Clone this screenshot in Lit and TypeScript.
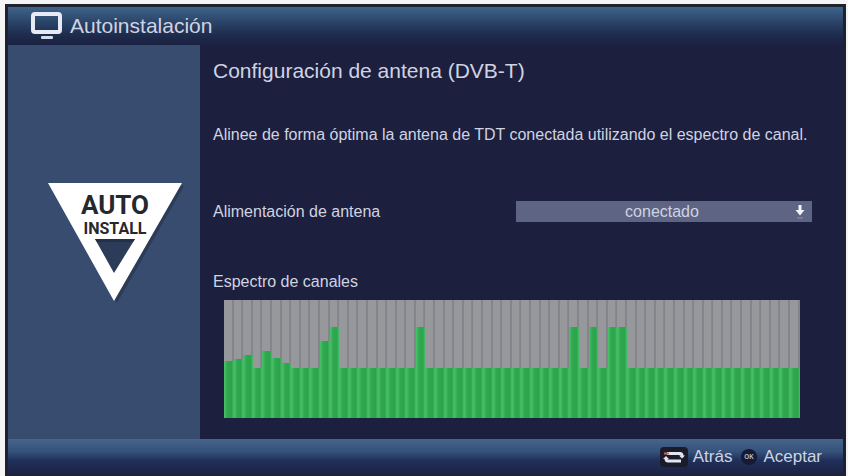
import { LitElement, html, css } from "lit";
import { customElement, property } from "lit/decorators.js";

const BASE_LEVEL = 42;
const PEAKS: Record<number, number> = {
  0: 48, 1: 50, 2: 53, 4: 57, 5: 51, 6: 47,
  10: 65, 11: 77, 20: 77, 36: 77, 38: 77, 40: 77, 41: 77,
};
const LEVELS = Array.from({ length: 60 }, (_, i) => PEAKS[i] ?? BASE_LEVEL);

@customElement("channel-spectrum")
export class ChannelSpectrum extends LitElement {
  @property({ attribute: false }) levels: number[] = [];

  static styles = css`
    :host { display: block; }
    .chart {
      display: flex;
      height: 118px;
      background: #929499;
    }
    .channel {
      flex: 1;
      display: flex;
      align-items: flex-end;
      background: linear-gradient(90deg, #96989c 0 75%, #7a7c83 90%, #8c8e93);
    }
    .level {
      width: 100%;
      background: linear-gradient(90deg, #4cc26b, #2fa84f 35%, #2ba54b 75%, #45bd64);
    }
  `;

  render() {
    return html`<div class="chart" role="img" aria-label="Espectro de canales">
      ${this.levels.map(
        (l) => html`<div class="channel"><div class="level" style="height:${l}%"></div></div>`
      )}
    </div>`;
  }
}

@customElement("app-root")
export class AppRoot extends LitElement {
  static styles = css`
    :host {
      display: block;
      box-sizing: border-box;
      min-height: 100vh;
      padding: 4px 2px 0 5px;
      background: #f4f4f4;
      font-family: "Liberation Sans", Arial, sans-serif;
      color: #d0d3e2;
    }
    * { box-sizing: border-box; }
    .screen {
      display: flex;
      flex-direction: column;
      min-height: calc(100vh - 4px);
      border: 3px solid #1d222e;
      border-bottom-width: 1px;
      background: #1c1f3d;
    }
    header {
      display: flex;
      align-items: center;
      gap: 6px;
      height: 38px;
      padding-left: 22px;
      background: linear-gradient(#3f648a, #2a4468 40%, #1d2b4c 75%, #1b2142);
    }
    .tv { width: 34px; height: 30px; }
    h1 { margin: 0; font-size: 21px; font-weight: 400; line-height: 24px; }
    .body { flex: 1; display: flex; }
    aside {
      width: 192px;
      padding-top: 138px;
      background: #374c6e;
    }
    .logo { display: block; width: 136px; height: 120px; margin-left: 40px; }
    .auto { font: 700 26px Roboto, sans-serif; }
    .install { font: 700 16px Roboto, sans-serif; }
    main { flex: 1; padding: 12px 31px 20px 13px; }
    h2 { margin: 0; font-size: 21px; font-weight: 400; line-height: 28px; }
    p { margin: 40px 0 0; font-size: 16px; line-height: 20px; white-space: nowrap; }
    .row {
      display: flex;
      align-items: center;
      justify-content: space-between;
      margin-top: 56px;
      font-size: 16px;
      line-height: 20px;
    }
    .picker { position: relative; width: 296px; height: 21px; }
    select {
      appearance: none;
      display: block;
      width: 100%;
      height: 100%;
      margin: 0;
      padding: 0 4px 0 0;
      border: 0;
      border-radius: 0;
      background: #5d6484;
      color: inherit;
      font: inherit;
      text-align: center;
      text-align-last: center;
    }
    .arrow { position: absolute; right: 6px; top: 3px; width: 12px; height: 16px; pointer-events: none; }
    h3 { margin: 50px 0 8px; font-size: 16px; font-weight: 400; line-height: 20px; }
    channel-spectrum { margin: 0 12px 0 11px; }
    footer {
      display: flex;
      align-items: center;
      justify-content: flex-end;
      gap: 8px;
      height: 36px;
      padding-right: 21px;
      background: linear-gradient(#47658a, #34527a 35%, #20305a 60%, #1d2140);
    }
    button {
      display: flex;
      align-items: center;
      gap: 5px;
      padding: 0;
      border: 0;
      background: none;
      color: inherit;
      font: inherit;
      font-size: 17px;
      line-height: 20px;
    }
    .swap { width: 28px; height: 20px; }
    .ok { width: 18px; height: 18px; }
  `;

  render() {
    return html`
      <div class="screen">
        <header>
          <svg class="tv" viewBox="0 0 34 30" aria-hidden="true">
            <rect x="3" y="3" width="27" height="18" rx="2" fill="none" stroke="#e6eaf4" stroke-width="4" />
            <rect x="11" y="25" width="12" height="3" rx="1" fill="#d5dbe8" />
          </svg>
          <h1>Autoinstalación</h1>
        </header>
        <div class="body">
          <aside>
            <svg class="logo" viewBox="0 0 136 120" role="img" aria-label="Auto Install">
              <path d="M3 3H136L69 120Z" fill="#23304a" opacity=".6" />
              <path fill="#fff" fill-rule="evenodd" d="M0 0H134L66 118ZM47 56L66 90L87 56Z" />
              <path d="M47 56H87L85 59H49Z" fill="#23304a" />
              <text class="auto" x="67" y="31" text-anchor="middle" fill="#26282e">AUTO</text>
              <text class="install" x="67" y="51" text-anchor="middle" fill="#26282e">INSTALL</text>
            </svg>
          </aside>
          <main>
            <h2>Configuración de antena (DVB-T)</h2>
            <p>Alinee de forma óptima la antena de TDT conectada utilizando el espectro de canal.</p>
            <div class="row">
              <label for="power">Alimentación de antena</label>
              <div class="picker">
                <select id="power">
                  <option>conectado</option>
                </select>
                <svg class="arrow" viewBox="0 0 12 16" aria-hidden="true">
                  <path d="M4.5 1H7.5V6H10.5L6 11.5L1.5 6H4.5Z" fill="#f2f4fa" />
                  <path d="M3 14H9" stroke="#8e94ae" />
                </svg>
              </div>
            </div>
            <h3>Espectro de canales</h3>
            <channel-spectrum .levels=${LEVELS}></channel-spectrum>
          </main>
        </div>
        <footer>
          <button type="button">
            <svg class="swap" viewBox="0 0 28 20" aria-hidden="true">
              <rect width="28" height="20" rx="4" fill="#1b1c2b" />
              <path d="M7 6.500H20Q22 6.500 22 9M21 14H8Q6 14 6 11.500" fill="none" stroke="#e4e6ee" stroke-width="3" />
              <path d="M19 8.500H25L22 11.500ZM3 12H9L6 9Z" fill="#e4e6ee" />
              <path d="M4 6.500H9" stroke="#c8695c" stroke-width="2" />
            </svg>
            Atrás
          </button>
          <button type="button">
            <svg class="ok" viewBox="0 0 20 20" aria-hidden="true">
              <circle cx="10" cy="10" r="9" fill="#161a33" />
              <text x="10" y="12.500" text-anchor="middle" font-size="7" font-weight="700" fill="#b9bed0">OK</text>
            </svg>
            Aceptar
          </button>
        </footer>
      </div>
    `;
  }
}
